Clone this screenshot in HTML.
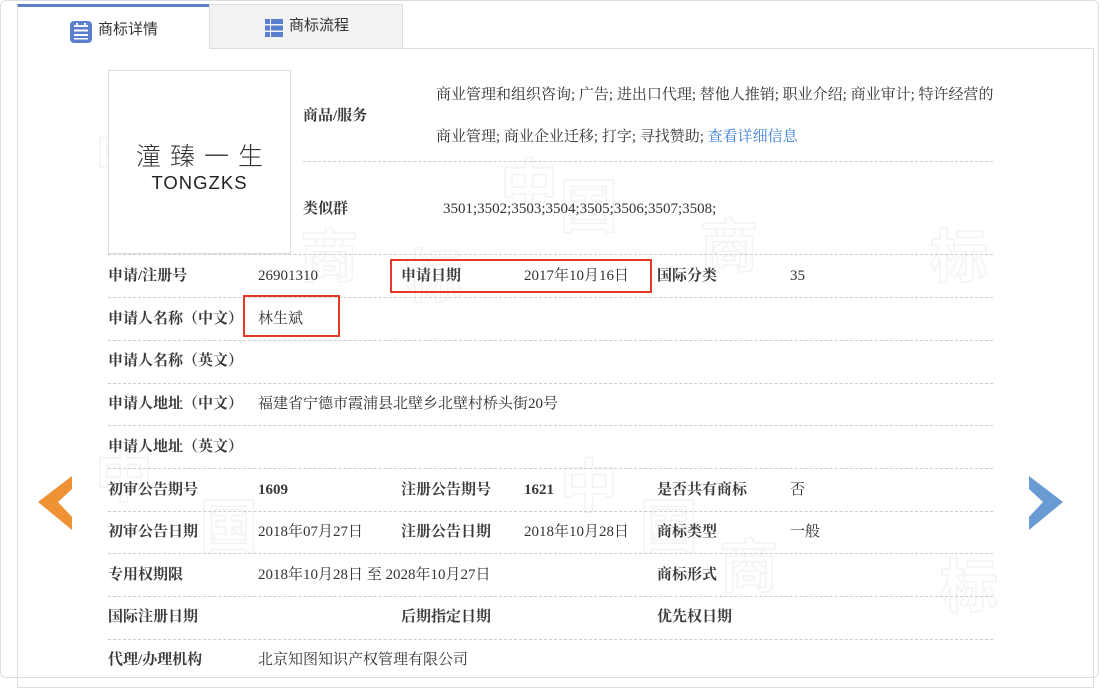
<!DOCTYPE html>
<html><head><meta charset="utf-8"><style>
*{margin:0;padding:0;box-sizing:border-box}
body{width:1099px;height:678px;background:#fff;position:relative;overflow:hidden;font-family:"Liberation Serif","Noto Serif CJK SC",serif;font-size:15px;color:#333}
.outer{position:absolute;left:0;top:0;width:1099px;height:678px;border:1px solid #ddd;border-radius:6px}
.frame{position:absolute;left:17px;top:48px;width:1077px;height:640px;border:1px solid #ddd}
.tab1{position:absolute;left:17px;top:4px;width:192px;height:45px;border-top:3px solid #5b7fce;border-left:1px solid #ddd;background:#fff;font-family:"Liberation Sans","Noto Sans CJK SC",sans-serif;font-size:15px;color:#333}
.tab2{position:absolute;left:209px;top:4px;width:194px;height:44px;border:1px solid #ddd;border-bottom:none;background:#f2f2f2;font-family:"Liberation Sans","Noto Sans CJK SC",sans-serif;font-size:15px;color:#333}
.t{position:absolute;white-space:nowrap;line-height:20px}
.b{font-weight:bold;color:#3a3a3a}
.dash{position:absolute;height:0;border-top:1px dashed #ccc}
.red{position:absolute;border:2px solid #e53a24}
.wm{position:absolute;font-family:"Noto Sans CJK SC",sans-serif;font-size:58px;color:transparent;-webkit-text-stroke:1.5px #f3f3f3;font-weight:bold}
</style></head><body>
<div class="outer"></div>
<div class="frame"></div>
<div class="wm" style="left:95px;top:110px">中</div>
<div class="wm" style="left:300px;top:210px">商</div>
<div class="wm" style="left:405px;top:230px">标</div>
<div class="wm" style="left:500px;top:140px">中</div>
<div class="wm" style="left:560px;top:160px">国</div>
<div class="wm" style="left:700px;top:200px">商</div>
<div class="wm" style="left:930px;top:210px">标</div>
<div class="wm" style="left:95px;top:430px">中</div>
<div class="wm" style="left:200px;top:480px">国</div>
<div class="wm" style="left:560px;top:440px">中</div>
<div class="wm" style="left:640px;top:480px">国</div>
<div class="wm" style="left:720px;top:520px">商</div>
<div class="wm" style="left:940px;top:540px">标</div>
<div class="tab1">
<svg style="position:absolute;left:52px;top:14px" width="22" height="22" viewBox="0 0 22 22"><rect x="0" y="0" width="22" height="22" rx="4" fill="#5b7fce"/><rect x="4" y="4" width="14" height="2" fill="#fff"/><rect x="4" y="8.5" width="14" height="2" fill="#fff"/><rect x="4" y="13" width="14" height="2" fill="#fff"/><rect x="4" y="17" width="14" height="1.5" fill="#fff"/><rect x="6" y="2" width="2" height="4" fill="#fff"/><rect x="14" y="2" width="2" height="4" fill="#fff"/></svg>
<span class="t" style="left:80px;top:13px">商标详情</span></div>
<div class="tab2">
<svg style="position:absolute;left:55px;top:14px" width="18" height="18" viewBox="0 0 18 18" fill="#5b7fce"><rect x="0" y="0" width="5" height="5"/><rect x="6" y="0" width="12" height="5"/><rect x="0" y="6.5" width="5" height="5"/><rect x="6" y="6.5" width="12" height="5"/><rect x="0" y="13" width="5" height="5"/><rect x="6" y="13" width="12" height="5"/></svg>
<span class="t" style="left:79px;top:11px">商标流程</span></div>

<div style="position:absolute;left:108px;top:70px;width:183px;height:184px;border:1px solid #ddd;background:#fff"></div>
<div class="t" style="left:108px;top:140px;width:183px;text-align:center;font-family:'Noto Sans CJK SC',sans-serif;font-size:25px;line-height:30px;color:#333;letter-spacing:9px;text-indent:9px;font-weight:300">潼臻一生</div>
<div class="t" style="left:108px;top:173px;width:183px;text-align:center;font-family:'Liberation Sans',sans-serif;font-size:18.5px;color:#222;letter-spacing:1px">TONGZKS</div>

<div class="t b" style="left:303px;top:106px">商品/服务</div>
<div class="t" style="left:436px;top:85px">商业管理和组织咨询; 广告; 进出口代理; 替他人推销; 职业介绍; 商业审计; 特许经营的</div>
<div class="t" style="left:436px;top:127px">商业管理; 商业企业迁移; 打字; 寻找赞助; <span style="color:#3a7fd5">查看详细信息</span></div>
<div class="dash" style="left:303px;top:161px;width:690px"></div>
<div class="t b" style="left:303px;top:199px">类似群</div>
<div class="t" style="left:443px;top:199px">3501;3502;3503;3504;3505;3506;3507;3508;</div>

<div class="dash" style="left:108px;top:254px;width:885px"></div>
<div class="dash" style="left:108px;top:297px;width:885px"></div>
<div class="dash" style="left:108px;top:340px;width:885px"></div>
<div class="dash" style="left:108px;top:383px;width:885px"></div>
<div class="dash" style="left:108px;top:425px;width:885px"></div>
<div class="dash" style="left:108px;top:468px;width:885px"></div>
<div class="dash" style="left:108px;top:511px;width:885px"></div>
<div class="dash" style="left:108px;top:553px;width:885px"></div>
<div class="dash" style="left:108px;top:596px;width:885px"></div>
<div class="dash" style="left:108px;top:639px;width:885px"></div>

<div class="t b" style="left:108px;top:266px">申请/注册号</div>
<div class="t" style="left:258px;top:266px">26901310</div>
<div class="t b" style="left:401px;top:266px">申请日期</div>
<div class="t" style="left:524px;top:266px">2017年10月16日</div>
<div class="t b" style="left:657px;top:266px">国际分类</div>
<div class="t" style="left:790px;top:266px">35</div>
<div class="red" style="left:390px;top:259px;width:262px;height:34px"></div>

<div class="t b" style="left:108px;top:309px">申请人名称（中文）</div>
<div class="t" style="left:258px;top:309px">林生斌</div>
<div class="red" style="left:243px;top:295px;width:97px;height:42px"></div>

<div class="t b" style="left:108px;top:351px">申请人名称（英文）</div>
<div class="t b" style="left:108px;top:394px">申请人地址（中文）</div>
<div class="t" style="left:258px;top:394px">福建省宁德市霞浦县北壁乡北壁村桥头街20号</div>
<div class="t b" style="left:108px;top:437px">申请人地址（英文）</div>

<div class="t b" style="left:108px;top:480px">初审公告期号</div>
<div class="t b" style="left:258px;top:480px">1609</div>
<div class="t b" style="left:401px;top:480px">注册公告期号</div>
<div class="t b" style="left:524px;top:480px">1621</div>
<div class="t b" style="left:657px;top:480px">是否共有商标</div>
<div class="t" style="left:790px;top:480px">否</div>

<div class="t b" style="left:108px;top:522px">初审公告日期</div>
<div class="t" style="left:258px;top:522px">2018年07月27日</div>
<div class="t b" style="left:401px;top:522px">注册公告日期</div>
<div class="t" style="left:524px;top:522px">2018年10月28日</div>
<div class="t b" style="left:657px;top:522px">商标类型</div>
<div class="t" style="left:790px;top:522px">一般</div>

<div class="t b" style="left:108px;top:565px">专用权期限</div>
<div class="t" style="left:258px;top:565px">2018年10月28日 至 2028年10月27日</div>
<div class="t b" style="left:657px;top:565px">商标形式</div>

<div class="t b" style="left:108px;top:607px">国际注册日期</div>
<div class="t b" style="left:401px;top:607px">后期指定日期</div>
<div class="t b" style="left:657px;top:607px">优先权日期</div>

<div class="t b" style="left:108px;top:650px">代理/办理机构</div>
<div class="t" style="left:258px;top:650px">北京知图知识产权管理有限公司</div>

<svg style="position:absolute;left:38px;top:475px" width="35" height="56" viewBox="0 0 35 56"><polygon points="0,27 34,1 34,14 20,27 34,42 34,55" fill="#ef9236"/></svg>
<svg style="position:absolute;left:1028px;top:475px" width="35" height="56" viewBox="0 0 35 56"><polygon points="35,27 1,1 1,14 15,27 1,42 1,55" fill="#6a9ad4"/></svg>
</body></html>
